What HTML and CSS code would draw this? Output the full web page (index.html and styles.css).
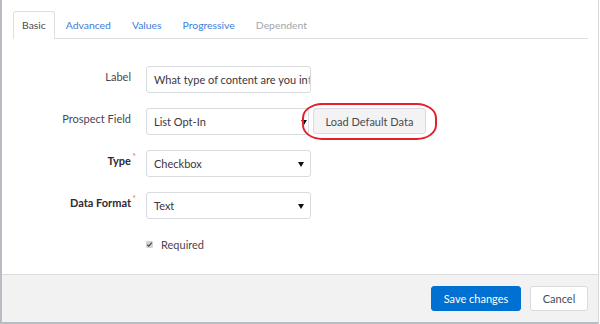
FILE: index.html
```html
<!DOCTYPE html>
<html lang="en">

<head>
    <meta charset="UTF-8">
    <title>Edit Field</title>
    <link rel="stylesheet" href="styles.css">
</head>

<body>
    <div class="modal">
        <div class="tabs">
            <div class="tab active">Basic</div>
            <div class="tab">Advanced</div>
            <div class="tab">Values</div>
            <div class="tab">Progressive</div>
            <div class="tab disabled">Dependent</div>
        </div>

        <div class="form">
            <div class="row">
                <div class="label">Label</div>
                <div class="input">What type of content are you in<span class="cut">t</span></div>
            </div>
            <div class="row">
                <div class="label">Prospect Field</div>
                <div class="field-group">
                    <div class="select short">List Opt-In<span class="arrow"></span></div>
                    <div class="load-wrap">
                        <button class="btn-load">Load Default Data</button>
                        <div class="highlight"></div>
                    </div>
                </div>
            </div>
            <div class="row">
                <div class="label bold req">Type</div>
                <div class="select">Checkbox<span class="arrow"></span></div>
            </div>
            <div class="row">
                <div class="label bold req">Data Format</div>
                <div class="select">Text<span class="arrow"></span></div>
            </div>
            <div class="row check-row">
                <div></div>
                <div class="check">
                    <span class="box">
                        <svg width="7" height="7" viewBox="0 0 7 7"><path d="M1.3 3.6 L2.8 5.1 L5.8 1.6" fill="none" stroke="#444" stroke-width="1.2"/></svg>
                    </span>
                    Required
                </div>
            </div>
        </div>

        <div class="footer">
            <button class="btn-save">Save changes</button>
            <button class="btn-cancel">Cancel</button>
        </div>
    </div>
</body>

</html>
```

FILE: styles.css
```css
body {
    margin: 0;
    padding: 0;
    font-family: Lato, "Open Sans", sans-serif;
    background-color: #ffffff;
}

.modal {
    width: 596px;
    height: 322px;
    border-left: 2px solid #b9bcc2;
    border-right: 1px solid #d6d8dc;
    border-bottom: 2px solid #b9bcc2;
    display: flex;
    flex-direction: column;
    background-color: #ffffff;
}

.tabs {
    display: flex;
    margin: 11px 10px 0 11px;
    border-bottom: 1px solid #dddfe3;
    height: 27px;
}

.tab {
    padding: 0 9px;
    margin-right: 1px;
    font-size: 10.4px;
    line-height: 27px;
    color: #3a7ed9;
    border: 1px solid transparent;
    border-bottom: none;
}

.tab.active {
    color: #4a4a52;
    border-color: #dddfe3;
    border-radius: 3px 3px 0 0;
    background-color: #ffffff;
    height: 27px;
    margin-bottom: -1px;
    padding: 0 8px;
}

.tab.disabled {
    color: #a3a6ab;
}

.form {
    flex: 1;
    padding-top: 27px;
}

.row {
    display: grid;
    grid-template-columns: 129px 165px;
    column-gap: 15px;
    margin-bottom: 15px;
}

.label {
    font-size: 11px;
    color: #4b4552;
    text-align: right;
    padding-top: 4px;
    position: relative;
}

.label.bold {
    font-weight: bold;
    color: #2e2a33;
}

.label.req::after {
    content: "*";
    position: absolute;
    right: -5px;
    top: 1px;
    font-size: 9px;
    color: #ec7f34;
    font-weight: normal;
}

.input,
.select {
    box-sizing: border-box;
    height: 27px;
    border: 1px solid #d8dbe0;
    border-radius: 3px;
    padding: 0 7px;
    font-size: 11px;
    line-height: 25px;
    color: #3b3641;
    white-space: nowrap;
    overflow: hidden;
    position: relative;
    background-color: #ffffff;
}

.cut {
    opacity: 0.5;
}

.select .arrow {
    position: absolute;
    right: 6px;
    top: 11px;
    width: 0;
    height: 0;
    border-left: 3px solid transparent;
    border-right: 3px solid transparent;
    border-top: 5px solid #111111;
}

.field-group {
    display: flex;
    align-items: flex-start;
}

.select.short {
    width: 163px;
    flex: none;
}

.select.short .arrow {
    right: 1px;
}

.load-wrap {
    position: relative;
    margin-left: 4px;
}

.btn-load {
    height: 26px;
    width: 113px;
    font-family: Lato, "Open Sans", sans-serif;
    font-size: 11px;
    color: #4a4a52;
    background-color: #f3f3f3;
    border: 1px solid #d8dbe0;
    border-radius: 3px;
    padding: 0;
}

.highlight {
    position: absolute;
    left: -11px;
    top: -5px;
    width: 131px;
    height: 33px;
    border: 2px solid #e3202c;
    border-radius: 20px / 15px;
}

.check-row {
    margin-top: 19px;
}

.check {
    display: flex;
    align-items: center;
    font-size: 11px;
    color: #4b4552;
}

.box {
    display: inline-flex;
    width: 7px;
    height: 7px;
    background-color: #d4d4d8;
    border-radius: 1px;
    margin-right: 8px;
}

.footer {
    height: 48px;
    flex: none;
    box-sizing: border-box;
    border-top: 1px solid #dcdcdc;
    background-color: #f2f2f2;
    display: flex;
    justify-content: flex-end;
    align-items: center;
    padding-right: 10px;
    gap: 9px;
}

.btn-save,
.btn-cancel {
    height: 25px;
    font-family: Lato, "Open Sans", sans-serif;
    font-size: 11px;
    border-radius: 3px;
    padding: 0;
}

.btn-save {
    width: 90px;
    background-color: #0070d2;
    color: #ffffff;
    border: 1px solid #0070d2;
}

.btn-cancel {
    width: 58px;
    background-color: #ffffff;
    color: #4a4a52;
    border: 1px solid #d8dbe0;
}
```
